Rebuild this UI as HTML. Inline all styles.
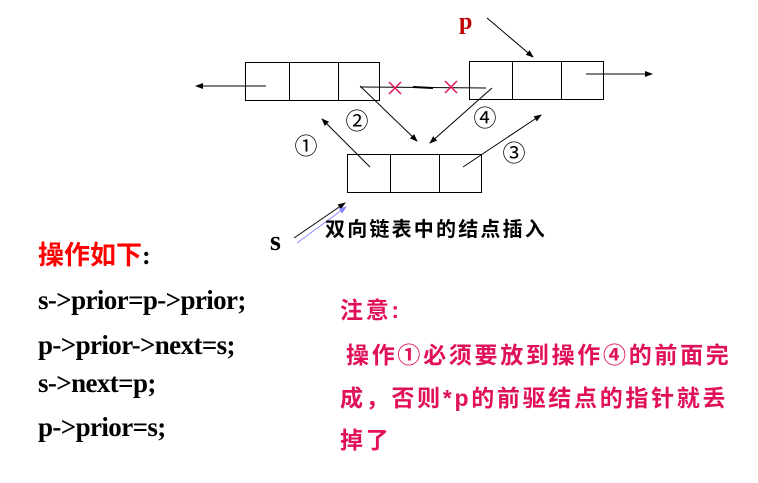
<!DOCTYPE html>
<html><head><meta charset="utf-8"><style>
body{margin:0;width:758px;height:483px;background:#fff;position:relative;overflow:hidden}
.a{position:absolute;white-space:nowrap}
.code{font-family:"Liberation Serif",serif;font-weight:bold;font-size:27px;color:#000;left:38px;letter-spacing:-0.6px;line-height:30px}
.pk{font-family:"Liberation Sans","Noto Sans CJK SC",sans-serif;font-weight:bold;font-size:23px;color:#e0105a;letter-spacing:2.7px;line-height:30px}
</style></head><body>
<svg class="a" style="left:0;top:0" width="758" height="260">
<defs><marker id="m" markerWidth="8" markerHeight="6" refX="7" refY="3" orient="auto" markerUnits="userSpaceOnUse"><path d="M0,0 L8,3 L0,6 z" fill="#000"/></marker>
<marker id="mb" markerWidth="8" markerHeight="6" refX="7" refY="3" orient="auto" markerUnits="userSpaceOnUse"><path d="M0,0 L8,3 L0,6 z" fill="#88f"/></marker></defs>
<g fill="none" stroke="#000" stroke-width="1">
<rect x="245.5" y="62.5" width="134" height="38"/><line x1="289.5" y1="62" x2="289.5" y2="100"/><line x1="338.5" y1="62" x2="338.5" y2="100"/>
<rect x="469.5" y="61.5" width="134" height="38"/><line x1="512.5" y1="61" x2="512.5" y2="99"/><line x1="561.5" y1="61" x2="561.5" y2="99"/>
<rect x="347.5" y="154.5" width="134" height="38"/><line x1="390.5" y1="154" x2="390.5" y2="192"/><line x1="439.5" y1="154" x2="439.5" y2="192"/>
<line x1="266" y1="86" x2="196" y2="86" marker-end="url(#m)"/>
<line x1="586" y1="74" x2="652" y2="74" marker-end="url(#m)"/>
<line x1="487" y1="18" x2="533" y2="57" marker-end="url(#m)"/>
<line x1="360" y1="87" x2="486" y2="88"/>
<line x1="413" y1="87" x2="433" y2="88" stroke-width="2"/>
<line x1="360" y1="86" x2="417" y2="141" marker-end="url(#m)"/>
<line x1="492" y1="88" x2="430" y2="143" marker-end="url(#m)"/>
<line x1="370" y1="167" x2="322" y2="119" marker-end="url(#m)"/>
<line x1="463" y1="167" x2="541" y2="115" marker-end="url(#m)"/>
<line x1="294" y1="238" x2="345" y2="203" marker-end="url(#m)"/>
<line x1="297" y1="243" x2="346" y2="207" stroke="#88f" marker-end="url(#mb)"/>
</g>
<g stroke="#e0105a" stroke-width="1.5">
<line x1="389" y1="82" x2="401" y2="94"/><line x1="401" y1="82" x2="389" y2="94"/>
<line x1="445" y1="81" x2="457" y2="93"/><line x1="457" y1="81" x2="445" y2="93"/>
</g>
<g font-family="Noto Sans CJK SC,sans-serif" font-size="23" fill="#000" text-anchor="middle">
<text x="306" y="154">①</text><text x="357" y="129">②</text><text x="485" y="126">④</text><text x="514" y="161">③</text>
</g>
<text x="459" y="29" font-family="Liberation Serif,serif" font-weight="bold" font-size="24" fill="#c00000">p</text>
<text x="270" y="250" font-family="Liberation Serif,serif" font-weight="bold" font-size="28" fill="#000">s</text>
<text x="325" y="236" font-family="Liberation Sans,Noto Sans CJK SC,sans-serif" font-weight="bold" font-size="20" letter-spacing="2.2" fill="#000">双向链表中的结点插入</text>
</svg>
<div class="a" style="left:38px;top:240px;font-family:'Liberation Sans','Noto Sans CJK SC',sans-serif;font-weight:bold;font-size:26px;line-height:30px;color:#f00">操作如下<span style="color:#000;font-family:'Liberation Serif',serif">:</span></div>
<div class="a code" style="top:285px">s-&gt;prior=p-&gt;prior;</div>
<div class="a code" style="top:330px">p-&gt;prior-&gt;next=s;</div>
<div class="a code" style="top:368px">s-&gt;next=p;</div>
<div class="a code" style="top:412px">p-&gt;prior=s;</div>
<div class="a pk" style="left:340px;top:295px">注意:</div>
<div class="a pk" style="left:346px;top:340px">操作①必须要放到操作④的前面完</div>
<div class="a pk" style="left:340px;top:383px">成，否则*p的前驱结点的指针就丢</div>
<div class="a pk" style="left:340px;top:425px">掉了</div>
</body></html>
